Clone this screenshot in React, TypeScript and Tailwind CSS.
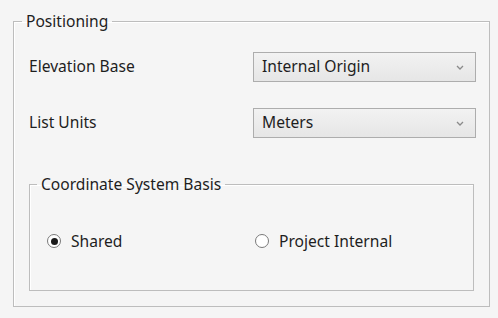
import React from "react";

const font = { fontFamily: '"Noto Sans", "Open Sans", sans-serif' };

function Combo({ value }: { value: string }) {
  return (
    <div className="flex h-[30px] w-[223px] items-center justify-between border border-[#adadad] bg-gradient-to-b from-[#f2f2f2] to-[#e6e6e6] pl-[8px] pr-[10px] text-[15.6px] text-[#1e1e1e]">
      <span>{value}</span>
      <svg width="8" height="5" viewBox="0 0 8 5" className="mr-[1px]">
        <path d="M1 1 L4 4 L7 1" fill="none" stroke="#8a8a8a" strokeWidth="1.3" />
      </svg>
    </div>
  );
}

function Radio({ checked, label }: { checked?: boolean; label: string }) {
  return (
    <div className="flex items-center gap-[10px]">
      <div className="flex h-[14px] w-[14px] items-center justify-center rounded-full border border-[#7a7a7a] bg-white">
        {checked && <div className="h-[7px] w-[7px] rounded-full bg-[#1a1a1a]" />}
      </div>
      <span className="text-[15.6px] leading-[24px] text-[#1e1e1e]">{label}</span>
    </div>
  );
}

export default function App() {
  return (
    <div className="h-[318px] w-[498px] overflow-hidden bg-[#f5f5f5] pl-[13px] pt-[11px]" style={font}>
      <fieldset className="w-[477px] border border-[#bdbdbd] pb-[15px] pl-[15px] pr-[13px] shadow-[inset_1px_1px_0_#ffffff]">
        <legend className="ml-[-7px] px-[4px] text-[15.6px] leading-[20px] text-[#1e1e1e]">Positioning</legend>
        <div className="mt-[21px] flex flex-col gap-[26px]">
          <div className="flex items-center justify-between">
            <span className="text-[15.6px] text-[#1e1e1e]">Elevation Base</span>
            <Combo value="Internal Origin" />
          </div>
          <div className="flex items-center justify-between">
            <span className="text-[15.6px] text-[#1e1e1e]">List Units</span>
            <Combo value="Meters" />
          </div>
        </div>
        <fieldset className="mt-[36px] mr-[2px] border border-[#bdbdbd] pb-[37px] pl-[17px] pt-[35px] shadow-[inset_1px_1px_0_#ffffff]">
          <legend className="ml-[-10px] px-[4px] text-[15.6px] leading-[20px] text-[#1e1e1e]">Coordinate System Basis</legend>
          <div className="flex items-center">
            <div className="w-[208px]">
              <Radio checked label="Shared" />
            </div>
            <Radio label="Project Internal" />
          </div>
        </fieldset>
      </fieldset>
    </div>
  );
}
